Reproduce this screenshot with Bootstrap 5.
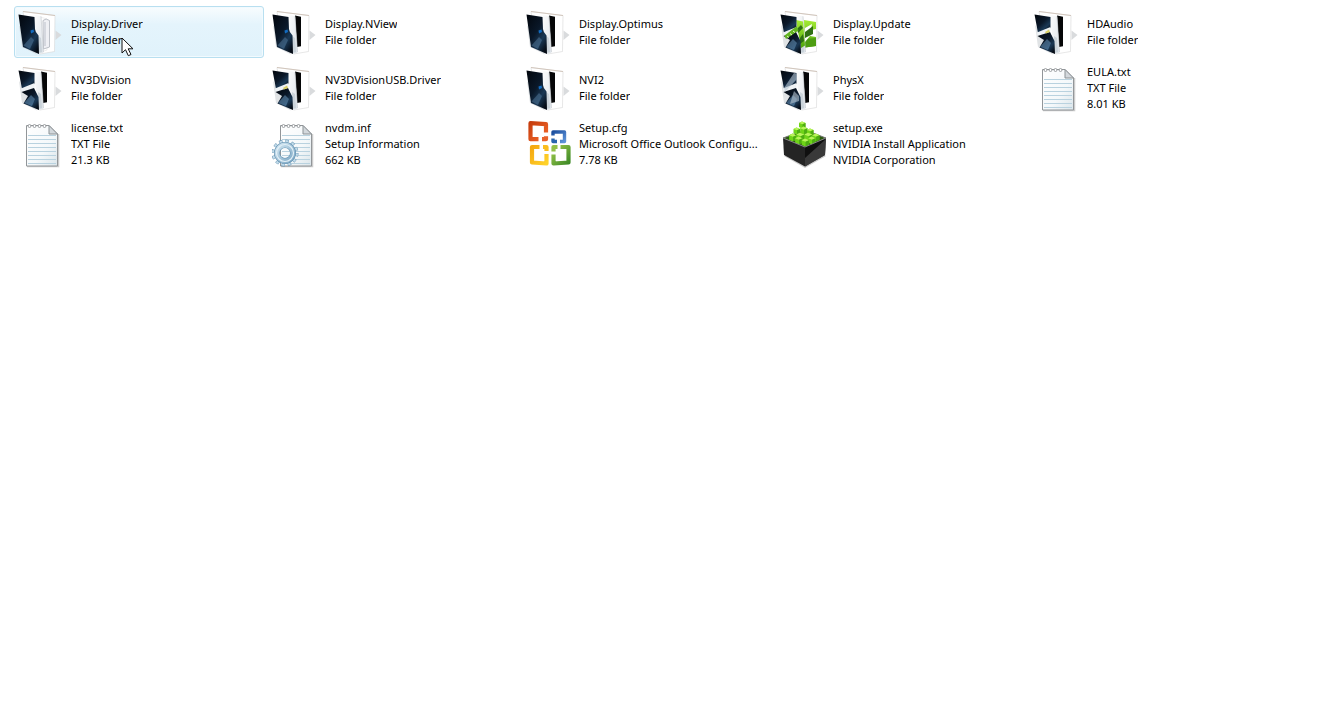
<!DOCTYPE html>
<html lang="en">
<head>
<meta charset="utf-8">
<meta name="viewport" content="width=device-width, initial-scale=1">
<title>Driver files</title>
<link rel="stylesheet" href="https://cdn.jsdelivr.net/npm/bootstrap@5.3.0/dist/css/bootstrap.min.css">
<style>
  body { font-family: "Noto Sans", "Open Sans", sans-serif; font-size: 11px; line-height: 16px; background: #fff; color: #000; }
  .files { padding: 6px 14px; gap: 4px; }
  .tile { width: 250px; height: 52px; padding: 1px 3px; gap: 5px; border: 1px solid transparent; border-radius: 3px; color: #000; }
  .tile.selected { border-color: #b8dff0; background: linear-gradient(#f8fcfe, #e4f4fc 35%, #e0f2fb); box-shadow: inset 0 0 0 1px #f2fafe; }
  .tile-icon { width: 48px; height: 48px; }
  .pointer { left: 106px; top: 30px; width: 14px; height: 20px; }
</style>
</head>
<body>
<svg width="0" height="0" class="position-absolute" aria-hidden="true">
  <defs>
    <linearGradient id="navy" x1="0" y1="0" x2=".8" y2="1"><stop offset="0" stop-color="#02060c"/><stop offset=".5" stop-color="#0a1829"/><stop offset=".75" stop-color="#1a3855"/><stop offset="1" stop-color="#050c16"/></linearGradient>
    <linearGradient id="paper" x1="0" y1="0" x2="1" y2="1"><stop offset="0" stop-color="#fff"/><stop offset="1" stop-color="#dce2e8"/></linearGradient>
    <linearGradient id="sheet" x1="0" y1="0" x2="1" y2="1"><stop offset="0" stop-color="#fff"/><stop offset=".6" stop-color="#f4f8fa"/><stop offset="1" stop-color="#dbe5ea"/></linearGradient>
    <linearGradient id="steel" x1="0" y1="0" x2="1" y2="1"><stop offset="0" stop-color="#cfe4f0"/><stop offset="1" stop-color="#7ea9c6"/></linearGradient>
    <linearGradient id="red" x1="0" y1="0" x2="1" y2="1"><stop offset="0" stop-color="#c73e0e"/><stop offset="1" stop-color="#f2672a"/></linearGradient>
    <linearGradient id="yellow" x1="0" y1="0" x2="1" y2="1"><stop offset="0" stop-color="#f5a811"/><stop offset="1" stop-color="#ffd32a"/></linearGradient>
    <linearGradient id="green" x1="0" y1="0" x2="1" y2="1"><stop offset="0" stop-color="#9dc84c"/><stop offset="1" stop-color="#3e8a26"/></linearGradient>
    <linearGradient id="blue" x1="0" y1="0" x2="1" y2="1"><stop offset="0" stop-color="#1d4f9e"/><stop offset="1" stop-color="#5d93d8"/></linearGradient>
    <linearGradient id="lime" x1="0" y1="0" x2="0" y2="1"><stop offset="0" stop-color="#a5ec35"/><stop offset="1" stop-color="#4fa50c"/></linearGradient>

    <symbol id="folder-back" viewBox="0 0 48 48">
      <path d="M37.500 22.500l6 4.500-6 5z" fill="#d9dbdd"/>
      <path d="M5 3.500L37 7.500 36.500 43.500 22 46 10 40z" fill="#fff" stroke="#d6d6d6" stroke-width=".6"/>
      <path d="M5 3.500L37 7.500" stroke="#cbbdb0" stroke-width=".8"/>
      <path d="M1 17L4 39 19 46.500 15 35z" fill="#cbd0d4" opacity=".6"/>
    </symbol>
    <symbol id="black-page" viewBox="0 0 48 48">
      <path d="M23 7.500l6 1.300v29.500l-4 .7z" fill="#050607"/>
    </symbol>
    <symbol id="front-page" viewBox="0 0 48 48">
      <path d="M15 6.500l8 1.800L24.500 30l1 14.500-4.500 1.500z" fill="url(#paper)"/>
      <path d="M23 8.300L25.500 44" stroke="#c3c8cd" stroke-width=".6"/>
      <path d="M20 28l3 2 1 14-3.500 1z" fill="#b9c4cd" opacity=".6"/>
    </symbol>
    <symbol id="folder-front" viewBox="0 0 48 48">
      <path d="M.5 6.500L16.500 9 17 21q.3 3.500 3.500 6.500L21 46 5 39z" fill="url(#navy)"/>
      <path d="M5.500 37.500L13 29l3 3-4 9z" fill="#54799b" opacity=".5"/>
      <path d="M12.500 22.500l3-1 .5 2.500-3 1.500z" fill="#126bc1"/>
    </symbol>
    <symbol id="split-front" viewBox="0 0 48 48">
      <path d="M.5 6.500L16.500 9v11L4 25z" fill="url(#navy)"/>
      <path d="M3 24.500L16.500 19v5.500L4 29z" fill="#eef2f5"/>
      <path d="M3.500 28L16 24l4.500 9 .5 13L5.500 39.500 10 32z" fill="url(#navy)"/>
      <path d="M6 39l7-8 4 4-3 7z" fill="#5e88ae" opacity=".6"/>
    </symbol>
    <symbol id="folder" viewBox="0 0 48 48"><use href="#folder-back"/><use href="#black-page"/><use href="#front-page"/><use href="#folder-front"/></symbol>
    <symbol id="folder-split" viewBox="0 0 48 48"><use href="#folder-back"/><use href="#black-page"/><use href="#front-page"/><use href="#split-front"/></symbol>
    <symbol id="folder-gold" viewBox="0 0 48 48"><use href="#folder-split"/><path d="M11 24l4-2.500 1 2.500-4 1.500z" fill="#d9cf65"/></symbol>
    <symbol id="folder-silver" viewBox="0 0 48 48"><use href="#folder-split"/><path d="M4 24L14 9l2.500.5v6L5 28zM14 27l5 5v5l-9 3z" fill="#b5c4d2" opacity=".6"/></symbol>
    <symbol id="folder-docs" viewBox="0 0 48 48">
      <use href="#folder-back"/>
      <path d="M22 9l7 2v31l-6 2z" fill="#fff" stroke="#ddd" stroke-width=".5"/>
      <path d="M25 12.500q3-3 6.500 0V39l-6 2z" fill="#eff0f4" stroke="#b6bac2" stroke-width=".9"/><path d="M27 14v24" stroke="#ccd1d8" stroke-width="1.500"/>
      <use href="#front-page"/><use href="#folder-front"/>
    </symbol>
    <symbol id="folder-green" viewBox="0 0 48 48">
      <use href="#folder-back"/>
      <path d="M24 12l12 2v24l-11 1.500z" fill="url(#lime)"/>
      <path d="M25 31l11-1v8l-11 1.500z" fill="#4d9d12"/>
      <path d="M25 20l7-4-1 6 5-1v8l-6-1-5 6z" fill="#fff"/>
      <path d="M25 24l8-6v8l-8 4z" fill="#2f6f14"/>
      <use href="#front-page"/>
      <path d="M16 12l7 1.500 2 24-4 2.500z" fill="url(#lime)"/>
      <path d="M17 21l4-4 2 3-5 5zM20 30l3-4 1 7-4 3z" fill="#2f6f14"/>
      <use href="#split-front"/>
      <path d="M4.500 27.500L17 18l1.500 4.500L6 31z" fill="#62b520"/>
      <path d="M7 28l2 1.500M10 25.500l2 1.500M13 23l2 1.500" stroke="#e3f7c8"/>
    </symbol>
    <symbol id="note" viewBox="0 0 48 48">
      <path d="M9 46.500h31.500V14" fill="none" stroke="#aaa" stroke-width="1.500" opacity=".6"/>
      <path d="M8.500 5.500H31l8.500 8.500v32h-31z" fill="url(#sheet)" stroke="#929699"/>
      <path d="M10 15.500h28M10 19.500h28M10 23.500h28M10 27.500h28M10 31.500h28M10 35.500h28M10 39.500h28M10 43.500h28" stroke="#b9d2df"/>
      <path d="M31 5.500v8.500h8.500z" fill="#d3d8dc" stroke="#8d9396"/>
      <g fill="#fff" stroke="#888c8f" stroke-width=".8"><circle cx="11.500" cy="6" r="1.500"/><circle cx="16.500" cy="6" r="1.500"/><circle cx="21.500" cy="6" r="1.500"/><circle cx="26.500" cy="6" r="1.500"/></g>
    </symbol>
    <symbol id="setup-info" viewBox="0 0 48 48">
      <use href="#note"/>
      <circle cx="13" cy="33" r="11.500" fill="none" stroke="#6f9ab8" stroke-width="4" stroke-dasharray="3.200 2.820"/>
      <circle cx="13" cy="33" r="11.500" fill="none" stroke="#c3dcea" stroke-width="3" stroke-dasharray="2.400 3.620" stroke-dashoffset="-.4"/>
      <circle cx="13" cy="33" r="8" fill="none" stroke="#6794b3" stroke-width="6"/>
      <circle cx="13" cy="33" r="8" fill="none" stroke="url(#steel)" stroke-width="4.800"/>
      <circle cx="13" cy="33" r="8.500" fill="none" stroke="#e3f0f7" stroke-width="1.200"/>
    </symbol>
    <symbol id="office" viewBox="0 0 48 48">
      <g fill="none" stroke-linejoin="round" stroke-width="4.200">
        <path d="M20 12.500V4.200L4.500 3.200v16h8" stroke="url(#red)"/>
        <path d="M16 19.200h4v-3" stroke="#e8622b"/>
        <path d="M27 15.500v-3.500h11.500v9.500H34" stroke="url(#blue)" stroke-width="3.400"/>
        <path d="M27 18.500v3h4" stroke="#2864ad" stroke-width="3.400"/>
        <path d="M13.500 27H6v15.500l14.500 1V34" stroke="url(#yellow)"/>
        <path d="M20.500 31v-4H17" stroke="#fbbd1c"/>
        <path d="M27.500 34.500v9l15-1V27h-8" stroke="url(#green)"/>
        <path d="M27.500 31.500V27h4" stroke="#93c048"/>
      </g>
    </symbol>
    <symbol id="cube" viewBox="0 0 8 8">
      <path d="M1 2l3-1.500L7.500 2v4L4 7.500 1 6z" fill="#6fd418"/><path d="M1 2l3-1.500L7.500 2 4.500 3.300z" fill="#b9f45b"/><path d="M4.500 3.300v4L7.500 6V2z" fill="#4dac12"/>
    </symbol>
    <symbol id="installer" viewBox="0 0 48 48">
      <path d="M4 36L25 48 46 36 40 33z" fill="#aaa" opacity=".6"/>
      <path d="M3 18L25 10 46 18 25 28z" fill="#2c5a10" stroke="#777"/>
      <use href="#cube" x="17" y="1" width="10" height="8"/>
      <use href="#cube" x="12" y="7" width="9" height="8"/><use href="#cube" x="19" y="6" width="9" height="9"/><use href="#cube" x="26" y="8" width="8" height="8"/>
      <use href="#cube" x="8" y="13" width="9" height="9"/><use href="#cube" x="15" y="12" width="10" height="10"/><use href="#cube" x="23" y="12" width="10" height="10"/><use href="#cube" x="31" y="13" width="9" height="9"/>
      <use href="#cube" x="14" y="16" width="9" height="9"/><use href="#cube" x="27" y="16" width="9" height="9"/><use href="#cube" x="20" y="18" width="10" height="9"/>
      <path d="M3 18l22 9v19.500L4 35z" fill="#242424"/><path d="M25 27l21-9-1 17-20 11.500z" fill="#101010"/>
      <path d="M3 18l22 9 21-9" fill="none" stroke="#8b8b8b" stroke-width=".9"/>
      <path d="M46 19l-1 16-20 11.500V38z" fill="#444" opacity=".8"/>
    </symbol>
  </defs>
</svg>

<main>
  <ul class="files list-unstyled d-flex flex-wrap mb-0">
    <li><a href="#" class="tile selected d-flex align-items-center position-relative text-decoration-none"><svg class="tile-icon flex-shrink-0"><use href="#folder-docs"/></svg><span class="text-truncate">Display.Driver<br>File folder</span>
      <svg class="pointer position-absolute" viewBox="0 0 14 20"><path d="M1 1v15l3.500-3.300 2.800 6 2.700-1.200-2.800-5.700H12z" fill="#fff" stroke="#111" stroke-linejoin="round"/></svg></a></li>
    <li><a href="#" class="tile d-flex align-items-center text-decoration-none"><svg class="tile-icon flex-shrink-0"><use href="#folder"/></svg><span class="text-truncate">Display.NView<br>File folder</span></a></li>
    <li><a href="#" class="tile d-flex align-items-center text-decoration-none"><svg class="tile-icon flex-shrink-0"><use href="#folder"/></svg><span class="text-truncate">Display.Optimus<br>File folder</span></a></li>
    <li><a href="#" class="tile d-flex align-items-center text-decoration-none"><svg class="tile-icon flex-shrink-0"><use href="#folder-green"/></svg><span class="text-truncate">Display.Update<br>File folder</span></a></li>
    <li><a href="#" class="tile d-flex align-items-center text-decoration-none"><svg class="tile-icon flex-shrink-0"><use href="#folder-gold"/></svg><span class="text-truncate">HDAudio<br>File folder</span></a></li>
    <li><a href="#" class="tile d-flex align-items-center text-decoration-none"><svg class="tile-icon flex-shrink-0"><use href="#folder-split"/></svg><span class="text-truncate">NV3DVision<br>File folder</span></a></li>
    <li><a href="#" class="tile d-flex align-items-center text-decoration-none"><svg class="tile-icon flex-shrink-0"><use href="#folder-gold"/></svg><span class="text-truncate">NV3DVisionUSB.Driver<br>File folder</span></a></li>
    <li><a href="#" class="tile d-flex align-items-center text-decoration-none"><svg class="tile-icon flex-shrink-0"><use href="#folder"/></svg><span class="text-truncate">NVI2<br>File folder</span></a></li>
    <li><a href="#" class="tile d-flex align-items-center text-decoration-none"><svg class="tile-icon flex-shrink-0"><use href="#folder-silver"/></svg><span class="text-truncate">PhysX<br>File folder</span></a></li>
    <li><a href="#" class="tile d-flex align-items-center text-decoration-none"><svg class="tile-icon flex-shrink-0"><use href="#note"/></svg><span class="text-truncate">EULA.txt<br>TXT File<br>8.01 KB</span></a></li>
    <li><a href="#" class="tile d-flex align-items-center text-decoration-none"><svg class="tile-icon flex-shrink-0"><use href="#note"/></svg><span class="text-truncate">license.txt<br>TXT File<br>21.3 KB</span></a></li>
    <li><a href="#" class="tile d-flex align-items-center text-decoration-none"><svg class="tile-icon flex-shrink-0"><use href="#setup-info"/></svg><span class="text-truncate">nvdm.inf<br>Setup Information<br>662 KB</span></a></li>
    <li><a href="#" class="tile d-flex align-items-center text-decoration-none"><svg class="tile-icon flex-shrink-0"><use href="#office"/></svg><span class="text-nowrap">Setup.cfg<br>Microsoft Office Outlook Configu...<br>7.78 KB</span></a></li>
    <li><a href="#" class="tile d-flex align-items-center text-decoration-none"><svg class="tile-icon flex-shrink-0"><use href="#installer"/></svg><span class="text-truncate">setup.exe<br>NVIDIA Install Application<br>NVIDIA Corporation</span></a></li>
  </ul>
</main>
<script src="https://cdn.jsdelivr.net/npm/bootstrap@5.3.0/dist/js/bootstrap.bundle.min.js"></script>
</body>
</html>
